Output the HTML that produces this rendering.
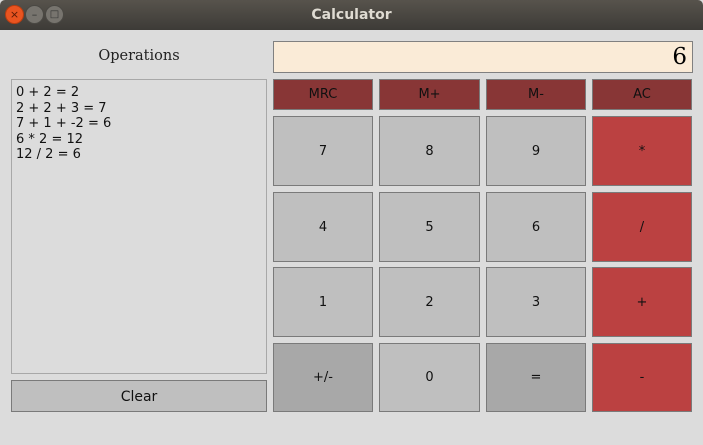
<!DOCTYPE html>
<html><head><style>
body{margin:0;width:703px;height:445px;background:#dcdcdc;position:relative;overflow:hidden;font-family:"DejaVu Sans","Liberation Sans",sans-serif}
.tb{position:absolute;left:0;top:0;width:703px;height:30px;background:linear-gradient(#57534c,#3d3b37);border-radius:5px 5px 0 0}
.tt{position:absolute;left:0;right:0;top:7px;text-align:center;color:#dfdbd2;font-weight:bold;font-size:14px}
.c{position:absolute;top:5px;width:19px;height:19px;border-radius:50%;box-sizing:border-box;font-size:11px;line-height:17px;text-align:center}
.b{position:absolute;box-sizing:border-box;border:1px solid #7a7a7a;display:flex;align-items:center;justify-content:center;font-size:13px;color:#111}
.g{background:#bfbfbf}.d{background:#a8a8a8}.r{background:#bb4141}.m{background:#883636}
</style></head><body>
<div class="tb"><div class="tt">Calculator</div>
<div class="c" style="left:5px;background:#e95420;border:1px solid #b83c10;color:#5a1a05">×</div>
<div class="c" style="left:25px;background:#77746e;border:1px solid #4a4843;color:#333">–</div>
<div class="c" style="left:45px;background:#77746e;border:1px solid #4a4843;color:#333;font-size:10px">□</div>
</div>
<div style="position:absolute;left:11px;width:256px;top:48px;text-align:center;font-family:'DejaVu Serif','Liberation Serif',serif;font-size:14.5px;color:#222">Operations</div>
<div style="position:absolute;left:11px;top:79px;width:256px;height:295px;box-sizing:border-box;border:1px solid #a8a8a8;padding:5px 4px;font-size:13px;line-height:15.5px;color:#111">0 + 2 = 2<br>2 + 2 + 3 = 7<br>7 + 1 + -2 = 6<br>6 * 2 = 12<br>12 / 2 = 6</div>
<div class="b g" style="left:11px;top:380px;width:256px;height:32px;font-size:14px;padding-top:2px">Clear</div>
<div style="position:absolute;left:273px;top:41px;width:420px;height:32px;box-sizing:border-box;border:1px solid #808080;background:#faebd7;text-align:right;padding-right:5px;font-family:'DejaVu Serif','Liberation Serif',serif;font-size:23px;line-height:30px">6</div>
<div class="b m" style="left:273px;top:79px;width:100px;height:31px">MRC</div>
<div class="b m" style="left:379px;top:79px;width:101px;height:31px">M+</div>
<div class="b m" style="left:486px;top:79px;width:100px;height:31px">M-</div>
<div class="b m" style="left:592px;top:79px;width:100px;height:31px">AC</div>

<div class="b g" style="left:273px;top:116px;width:100px;height:70px">7</div>
<div class="b g" style="left:379px;top:116px;width:101px;height:70px">8</div>
<div class="b g" style="left:486px;top:116px;width:100px;height:70px">9</div>
<div class="b r" style="left:592px;top:116px;width:100px;height:70px">*</div>

<div class="b g" style="left:273px;top:192px;width:100px;height:70px">4</div>
<div class="b g" style="left:379px;top:192px;width:101px;height:70px">5</div>
<div class="b g" style="left:486px;top:192px;width:100px;height:70px">6</div>
<div class="b r" style="left:592px;top:192px;width:100px;height:70px">/</div>

<div class="b g" style="left:273px;top:267px;width:100px;height:70px">1</div>
<div class="b g" style="left:379px;top:267px;width:101px;height:70px">2</div>
<div class="b g" style="left:486px;top:267px;width:100px;height:70px">3</div>
<div class="b r" style="left:592px;top:267px;width:100px;height:70px">+</div>

<div class="b d" style="left:273px;top:343px;width:100px;height:69px">+/-</div>
<div class="b g" style="left:379px;top:343px;width:101px;height:69px">0</div>
<div class="b d" style="left:486px;top:343px;width:100px;height:69px">=</div>
<div class="b r" style="left:592px;top:343px;width:100px;height:69px">-</div>
</body></html>
